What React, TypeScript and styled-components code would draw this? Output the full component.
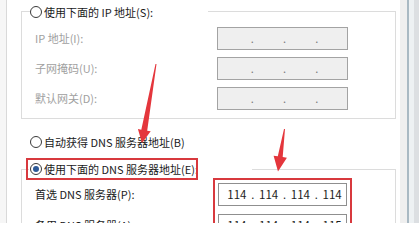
import React from "react";
import styled, { createGlobalStyle } from "styled-components";

// 页面基础样式
const GlobalStyle = createGlobalStyle`
  html, body {
    margin: 0;
    padding: 0;
    background: #ffffff;
  }
  body {
    font-family: "Noto Sans CJK SC", "Noto Sans", sans-serif;
    font-size: 11px;
    color: #1a1a1a;
  }
`;

const Window = styled.div`
  position: relative;
  display: flex;
  width: 419px;
  height: 223px;
  overflow: hidden;
  background: #ffffff;
`;

const LeftEdge = styled.div`
  flex: none;
  width: 6px;
  background: #f6f6f6;
  border-right: 1px solid #d9d9d9;
`;

const Pane = styled.div`
  flex: 1;
  min-width: 0;
  display: flex;
  flex-direction: column;
  padding-left: 1px;
`;

const RightEdge = styled.div`
  flex: none;
  width: 19px;
  background: linear-gradient(
    to right,
    #efefef 0,
    #efefef 7px,
    #a9b9c3 7px,
    #a9b9c3 9px,
    #edf1f3 9px,
    #edf1f3 14px,
    #dcdfe2 14px
  );
`;

// 分组框（fieldset），标题压在上边框上
const Group = styled.fieldset<{ $top: number; $gap: number }>`
  margin: ${(p) => p.$top}px 4px 0 13px;
  padding: ${(p) => p.$gap}px 0 8px 13px;
  border: 1px solid #dcdcdc;
  min-width: 0;
`;

// legend 的位置从 fieldset 的 padding-left 开始算，所以这里用负的偏移
const Legend = styled.legend<{ $width: number; $offset: number; $height: number }>`
  display: flex;
  align-items: center;
  width: ${(p) => p.$width}px;
  height: ${(p) => p.$height}px;
  margin-left: ${(p) => p.$offset - 13}px;
  padding: 0;
  line-height: ${(p) => p.$height}px;
`;

const Choice = styled.label<{ $marked?: boolean; $indent?: number }>`
  display: flex;
  align-items: center;
  gap: 2px;
  height: 14px;
  line-height: 14px;
  white-space: nowrap;
  color: #1a1a1a;
  margin-left: ${(p) => p.$indent ?? 0}px;
  width: ${(p) => (p.$marked ? "164px" : "auto")};
  outline: ${(p) => (p.$marked ? "2px solid #d8393e" : "none")};
  outline-offset: 2px;
`;

const AutoRow = styled.div`
  display: flex;
  margin: 16px 0 0 22px;
  height: 15px;
  align-items: center;
`;

const Radio = styled.span<{ $checked?: boolean }>`
  flex: none;
  position: relative;
  box-sizing: border-box;
  width: 12px;
  height: 12px;
  border-radius: 50%;
  border: 1px solid #3a3a3a;
  background: #ffffff;

  &::after {
    content: "";
    display: ${(p) => (p.$checked ? "block" : "none")};
    position: absolute;
    left: 2px;
    top: 2px;
    width: 6px;
    height: 6px;
    border-radius: 50%;
    background: #2d5a98;
  }
`;

const Fields = styled.div`
  display: flex;
`;

const LabelColumn = styled.div<{ $gap: number }>`
  display: flex;
  flex-direction: column;
  gap: ${(p) => p.$gap}px;
  width: 182px;
`;

const FieldLabel = styled.div<{ $disabled?: boolean }>`
  height: 23px;
  line-height: 23px;
  white-space: nowrap;
  color: ${(p) => (p.$disabled ? "#a0a0a0" : "#1a1a1a")};
`;

const InputColumn = styled.div<{ $gap: number; $marked?: boolean }>`
  display: flex;
  flex-direction: column;
  gap: ${(p) => p.$gap}px;
  width: ${(p) => (p.$marked ? 129 : 131)}px;
  margin-left: ${(p) => (p.$marked ? 1 : 0)}px;
  outline: ${(p) => (p.$marked ? "2px solid #d8393e" : "none")};
  outline-offset: 3px;
`;

const IpBox = styled.div<{ $disabled?: boolean }>`
  box-sizing: border-box;
  display: grid;
  grid-template-columns: 1fr 4px 1fr 4px 1fr 4px 1fr;
  align-items: center;
  height: 23px;
  padding-left: 4px;
  border: 1px solid ${(p) => (p.$disabled ? "#a3a3a3" : "#8f8f8f")};
  background: ${(p) => (p.$disabled ? "#efefef" : "#ffffff")};
  color: ${(p) => (p.$disabled ? "#7a7a7a" : "#1e1e1e")};
  line-height: 21px;
`;

const Octet = styled.span`
  text-align: center;
  font-size: 11.5px;
`;

const Dot = styled.span`
  text-align: center;
`;

const Annotations = styled.svg`
  position: absolute;
  left: 0;
  top: 0;
  pointer-events: none;
`;

type IpProps = { values?: string[]; disabled?: boolean };

const IpField: React.FC<IpProps> = ({ values = ["", "", "", ""], disabled }) => (
  <IpBox $disabled={disabled}>
    {values.map((v, i) => (
      <React.Fragment key={i}>
        <Octet>{v}</Octet>
        {i < 3 && <Dot>.</Dot>}
      </React.Fragment>
    ))}
  </IpBox>
);

const ipLabels = ["IP 地址(I):", "子网掩码(U):", "默认网关(D):"];

const dnsRows = [
  { label: "首选 DNS 服务器(P):", values: ["114", "114", "114", "114"] },
  { label: "备用 DNS 服务器(A):", values: ["114", "114", "114", "115"] },
];

const App: React.FC = () => {
  return (
    <>
      <GlobalStyle />
      <Window>
        <LeftEdge />
        <Pane>
          <Group $top={4} $gap={8}>
            <Legend $width={178} $offset={8} $height={15}>
              <Choice>
                <Radio />
                使用下面的 IP 地址(S):
              </Choice>
            </Legend>
            <Fields>
              <LabelColumn $gap={7}>
                {ipLabels.map((l) => (
                  <FieldLabel key={l} $disabled>
                    {l}
                  </FieldLabel>
                ))}
              </LabelColumn>
              <InputColumn $gap={7}>
                {ipLabels.map((l) => (
                  <IpField key={l} disabled />
                ))}
              </InputColumn>
            </Fields>
          </Group>

          <AutoRow>
            <Choice>
              <Radio />
              自动获得 DNS 服务器地址(B)
            </Choice>
          </AutoRow>

          <Group $top={13} $gap={7}>
            <Legend $width={223} $offset={7} $height={14}>
              <Choice $marked $indent={1}>
                <Radio $checked />
                使用下面的 DNS 服务器地址(E):
              </Choice>
            </Legend>
            <Fields>
              <LabelColumn $gap={8}>
                {dnsRows.map((r) => (
                  <FieldLabel key={r.label}>{r.label}</FieldLabel>
                ))}
              </LabelColumn>
              <InputColumn $gap={8} $marked>
                {dnsRows.map((r) => (
                  <IpField key={r.label} values={r.values} />
                ))}
              </InputColumn>
            </Fields>
          </Group>
        </Pane>
        <RightEdge />

        <Annotations width={419} height={223} viewBox="0 0 419 223">
          <polygon
            points="155.5,63.9 156.5,64.1 147.2,130.7 150.7,131.3 142,143 137.9,129.1 141.3,129.7"
            fill="#e4363c"
          />
          <polygon
            points="284,128.9 285,129.1 282.7,157.1 286.9,157.7 278,171.5 273.6,155.7 277.8,156.3"
            fill="#e4363c"
          />
        </Annotations>
      </Window>
    </>
  );
};

export default App;
